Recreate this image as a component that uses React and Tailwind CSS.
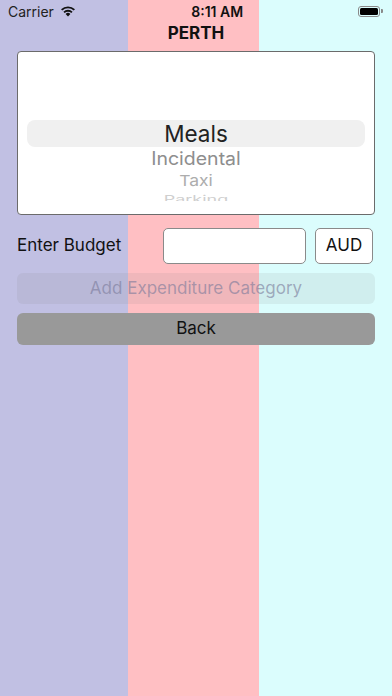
export default function App() {
  return (
    <div className="w-[392px] h-[696px] bg-[linear-gradient(to_right,#c1c0e3_0px,#c1c0e3_128px,#ffbfc3_128px,#ffbfc3_259px,#dbfdfd_259px)] font-['Inter',sans-serif] text-black">
      {/* status bar */}
      <div className="h-[22px] flex items-center justify-between px-2 relative">
        <div className="flex items-center gap-[6px] text-[14px] text-[#222]">
          <span>Carrier</span>
          <svg width="16" height="12" viewBox="0 0 16 12">
            <path d="M8 11.5 L5.6 8.9 A3.4 3.4 0 0 1 10.4 8.9 Z" fill="#111" />
            <path d="M3.4 6.7 A6.5 6.5 0 0 1 12.6 6.7 L11.3 8 A4.7 4.7 0 0 0 4.7 8 Z" fill="#111" />
            <path d="M1 4.3 A10 10 0 0 1 15 4.3 L13.7 5.6 A8.2 8.2 0 0 0 2.3 5.6 Z" fill="#111" />
          </svg>
        </div>
        <span className="text-[14px] font-semibold text-[#111]">8:11 AM</span>
        <div className="flex items-center mr-[1px]">
          <div className="w-[22px] h-[11px] rounded-[3px] border border-[#8a8a8a] p-[1px]">
            <div className="w-full h-full rounded-[1.5px] bg-black" />
          </div>
          <div className="w-[1.5px] h-[4px] bg-[#8a8a8a] rounded-r-[1px] ml-[1px]" />
        </div>
      </div>
      {/* title */}
      <div className="h-[22px] pt-[1px] flex items-center justify-center text-[17px] font-bold text-[#111]">
        PERTH
      </div>
      {/* picker */}
      <div className="mt-[7px] mx-[17px] h-[164px] bg-white border border-[#6b6b6b] rounded-[4px]">
        <div className="h-[149px] overflow-hidden flex flex-col">
          <div className="h-[68px] shrink-0" />
          <div className="mx-[9px] h-[27px] shrink-0 rounded-[8px] bg-[#f0f0f0] flex items-center justify-center text-[22.5px] text-[#222]">
            Meals
          </div>
          <div className="h-[24px] shrink-0 flex items-center justify-center text-[19.5px] text-[#8e8e8e] scale-y-[0.93]">
            Incidental
          </div>
          <div className="h-[20px] shrink-0 flex items-center justify-center text-[17.5px] text-[#adadad] scale-y-[0.85]">
            Taxi
          </div>
          <div className="h-[16px] shrink-0 flex items-center justify-center text-[18px] text-[#cfcfcf] scale-y-[0.6]">
            Parking
          </div>
        </div>
      </div>
      {/* budget row */}
      <div className="mt-[13px] mx-[17px] h-[36px] flex items-center">
        <span className="text-[17px] text-[#111] w-[146px]">Enter Budget</span>
        <div className="w-[143px] h-[36px] bg-white border border-[#8a8a8a] rounded-[5px]" />
        <div className="ml-[9px] w-[58px] h-[36px] bg-white border border-[#8a8a8a] rounded-[5px] flex items-center justify-center text-[17px] text-[#111]">
          AUD
        </div>
      </div>
      {/* add button */}
      <div className="mt-[9px] mx-[17px] h-[31px] rounded-[6px] bg-[#808080]/[0.12] flex items-center justify-center text-[17px] text-[#7a7a9a]/60">
        Add Expenditure Category
      </div>
      {/* back */}
      <div className="mt-[9px] mx-[17px] h-[32px] rounded-[6px] bg-[#999999] flex items-center justify-center text-[17px] text-[#111]">
        Back
      </div>
    </div>
  );
}
